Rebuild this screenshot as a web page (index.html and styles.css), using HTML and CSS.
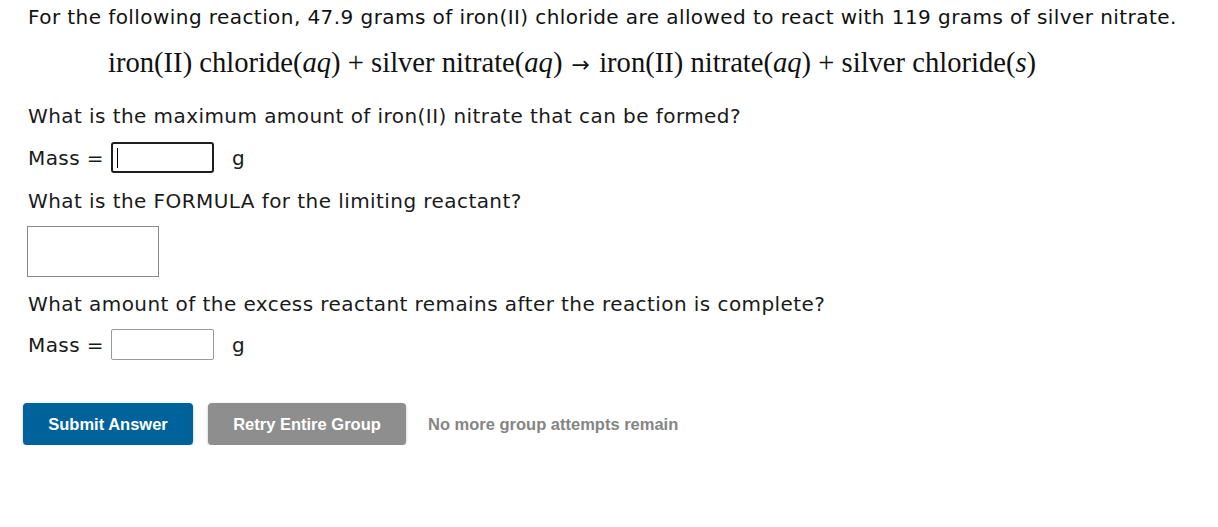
FILE: index.html
```html
<!DOCTYPE html>
<html>
<head>
<meta charset="utf-8">
<link rel="stylesheet" href="styles.css">
</head>
<body>
<div class="question">
  <p class="intro">For the following reaction, 47.9 grams of iron(II) chloride are allowed to react with 119 grams of silver nitrate.</p>
  <div class="equation">iron(II) chloride(<i>aq</i>) + silver nitrate(<i>aq</i>) <span class="arrow">→</span> iron(II) nitrate(<i>aq</i>) + silver chloride(<i>s</i>)</div>
  <p class="prompt p1">What is the maximum amount of iron(II) nitrate that can be formed?</p>
  <div class="answer-row r1"><span class="label">Mass =</span><span class="field focused"><span class="caret"></span></span><span class="unit">g</span></div>
  <p class="prompt p2">What is the FORMULA for the limiting reactant?</p>
  <div class="formula-box"></div>
  <p class="prompt p3">What amount of the excess reactant remains after the reaction is complete?</p>
  <div class="answer-row r2"><span class="label">Mass =</span><span class="field"></span><span class="unit">g</span></div>
  <div class="actions">
    <button class="btn btn-primary">Submit Answer</button>
    <button class="btn btn-secondary">Retry Entire Group</button>
    <span class="note">No more group attempts remain</span>
  </div>
</div>
</body>
</html>
```
FILE: styles.css
```css
html, body { margin: 0; padding: 0; background: #fff; }
body { font-family: "DejaVu Sans", Verdana, sans-serif; font-size: 20px; letter-spacing: 0.43px; color: #111; }
.question { padding: 0 0 0 28px; }
p { margin: 0; }
.intro { line-height: 24px; padding-top: 5px; }
.equation { font-family: "Liberation Serif", "DejaVu Serif", serif; font-size: 28.6px; letter-spacing: 0; line-height: 32px; padding-left: 80px; margin-top: 18px; color: #111; }
.equation i { font-style: italic; }
.arrow { font-family: "DejaVu Sans", sans-serif; font-size: 22px; padding: 0 2px; }
.prompt { line-height: 24px; color: #1a1a1a; }
.p1 { margin-top: 23px; }
.answer-row { display: flex; align-items: center; color: #1a1a1a; }
.r1 { margin-top: 14px; }
.label { width: 83px; }
.field { box-sizing: border-box; width: 103px; height: 31px; border: 1px solid #999; border-radius: 2px; display: flex; align-items: center; }
.field.focused { border: 2px solid #1e1e1e; border-radius: 3px; padding-left: 4px; }
.caret { width: 1px; height: 20px; background: #000; }
.unit { margin-left: 18px; }
.p2 { margin-top: 16px; }
.formula-box { box-sizing: border-box; width: 132px; height: 51px; border: 1px solid #8a8a8a; margin-left: -1px; margin-top: 13px; }
.p3 { margin-top: 15px; }
.r2 { margin-top: 13px; }
.actions { display: flex; align-items: center; margin-top: 43px; margin-left: -5px; }
.btn { box-sizing: border-box; height: 42px; border: none; border-radius: 4px; color: #fff; font-family: "Liberation Sans", Arial, sans-serif; font-weight: bold; font-size: 16.5px; letter-spacing: 0; box-shadow: 0 1px 3px rgba(0,0,0,0.25); }
.btn-primary { width: 170px; background: #00629b; }
.btn-secondary { width: 198px; background: #8e8e8e; margin-left: 15px; }
.note { margin-left: 22px; font-family: "Liberation Sans", Arial, sans-serif; font-weight: bold; font-size: 16.5px; letter-spacing: 0; color: #858585; }
```
